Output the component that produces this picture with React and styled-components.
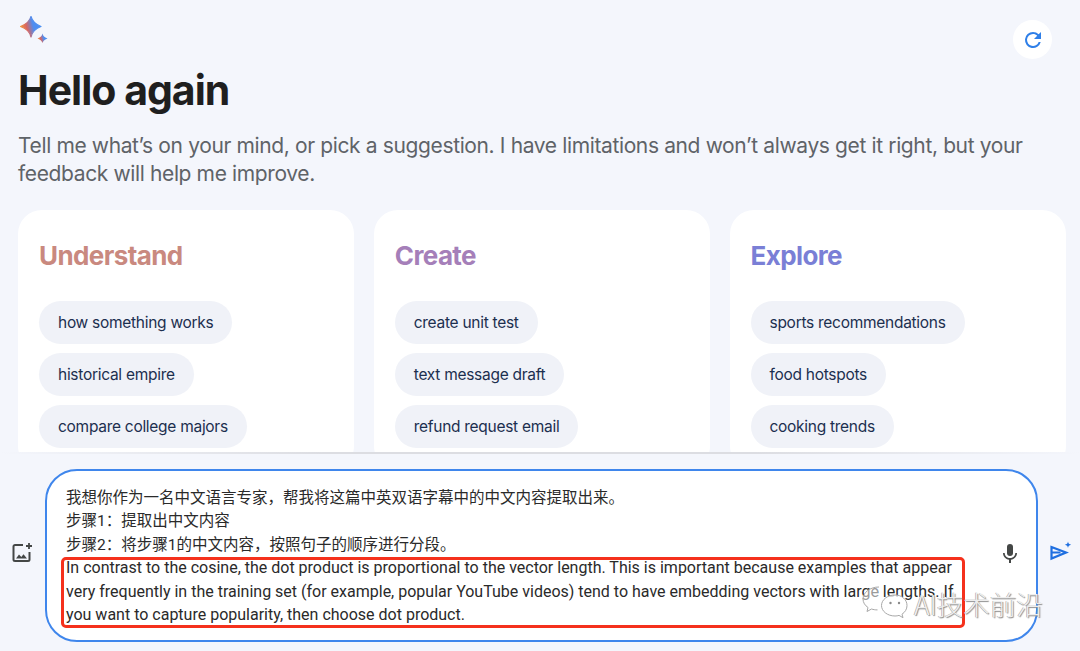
import styled, { createGlobalStyle } from 'styled-components'

const GlobalStyle = createGlobalStyle`
  html, body {
    margin: 0;
    height: 100%;
    background: #f4f6fc;
  }
  body {
    font-family: "Inter", "Noto Sans CJK SC", sans-serif;
    overflow: hidden;
  }
`

const columns = [
  { title: 'Understand', color: '#c9897f', chips: ['how something works', 'historical empire', 'compare college majors'] },
  { title: 'Create', color: '#a57fb9', chips: ['create unit test', 'text message draft', 'refund request email'] },
  { title: 'Explore', color: '#7a7fd6', chips: ['sports recommendations', 'food hotspots', 'cooking trends'] },
]

const Spark = () => (
  <svg width="30" height="30" viewBox="0 0 30 30">
    <defs>
      <linearGradient id="spark" x1="0" y1="0.6" x2="1" y2="0.35">
        <stop offset="0" stopColor="#f29a3e" />
        <stop offset="0.3" stopColor="#d9655f" />
        <stop offset="0.62" stopColor="#4f8df0" />
        <stop offset="1" stopColor="#4a90f2" />
      </linearGradient>
    </defs>
    <path d="M11 0.500C12.300 5.500 15.500 8.500 21 10.500C15.500 12.500 12.300 15.500 11 21C9.700 15.500 6.500 12.500 0.500 10.500C6.500 8.500 9.700 5.500 11 0.500Z" fill="url(#spark)" strokeLinejoin="round" stroke="url(#spark)" strokeWidth="1.200" />
    <path d="M22.500 17.500C23.100 20 24.300 21 27.500 22.500C24.300 24 23.100 25 22.500 27C21.900 25 20.700 24 17.500 22.500C20.700 21 21.900 20 22.500 17.500Z" fill="url(#spark)" />
  </svg>
)

const RefreshIcon = () => (
  <svg width="24" height="24" viewBox="0 0 24 24" fill="#2f7fe8">
    <path d="M17.650 6.350A7.950 7.950 0 0 0 12 4a8 8 0 1 0 7.730 10h-2.080A6 6 0 1 1 12 6c1.660 0 3.140.69 4.220 1.780L13 11h7V4l-2.350 2.350z" />
  </svg>
)

const AddImageIcon = () => (
  <svg width="22" height="22" viewBox="0 0 22 22">
    <path d="M12 3H4a1.500 1.500 0 0 0-1.500 1.500v13A1.500 1.500 0 0 0 4 19h13a1.500 1.500 0 0 0 1.500-1.500V10" fill="none" stroke="#444746" strokeWidth="2" />
    <path d="M5 16.500l3-4 2.300 2.500 2.200-2.800 3.500 4.300z" fill="#444746" />
    <path d="M18 1v6M15 4h6" stroke="#444746" strokeWidth="1.800" fill="none" />
  </svg>
)

const MicIcon = () => (
  <svg width="24" height="24" viewBox="0 0 24 24" fill="#444746">
    <path d="M12 14a3 3 0 0 0 3-3V5a3 3 0 0 0-6 0v6a3 3 0 0 0 3 3z" />
    <path d="M17.300 11c0 3-2.500 5.100-5.300 5.100S6.700 14 6.700 11H5c0 3.400 2.700 6.200 6 6.700V21h2v-3.300c3.300-.5 6-3.300 6-6.700h-1.700z" />
  </svg>
)

const SendIcon = () => (
  <svg width="24" height="24" viewBox="0 0 24 24">
    <path d="M2.500 7l14.500 5.500L2.500 18.500z" fill="none" stroke="#1f6fe0" strokeWidth="2.200" />
    <path d="M2.500 12.500h9" stroke="#1f6fe0" strokeWidth="2" />
    <path d="M19 1.500c.3 2 1.100 2.800 3.200 3.200-2.100.4-2.900 1.200-3.200 3.200-.3-2-1.100-2.800-3.200-3.200 2.100-.4 2.900-1.200 3.200-3.200z" fill="#1f6fe0" />
  </svg>
)

const WeChatIcon = () => (
  <svg width="46" height="36" viewBox="0 0 46 36" fill="none" stroke="#a8a8a8" strokeWidth="1">
    <path d="M17 1C8 1 1 6.500 1 13c0 3.500 2 6.500 5 8.500l-1 4 4.500-2.500c2 .6 3.500.9 6 .9" fill="#ffffff88" />
    <path d="M33 9c-7.500 0-13.500 4.700-13.500 10.500S25.500 30 33 30c1.500 0 2.800-.2 4-.6l4 2.300-1-3.500c3-2 5-5 5-8.700C45 13.700 40 9 33 9z" fill="#ffffffcc" />
    <circle cx="28.500" cy="17" r="1.200" fill="#8a8a8a" stroke="none" />
    <circle cx="37" cy="17" r="1.200" fill="#8a8a8a" stroke="none" />
  </svg>
)

const App = () => {
  return (
    <Page>
      <GlobalStyle />
      <Scroller>
        <TopBar>
          <Logo><Spark /></Logo>
          <RoundButton><RefreshIcon /></RoundButton>
        </TopBar>
        <Title>Hello again</Title>
        <Intro>
          Tell me what’s on your mind, or pick a suggestion. I have limitations and won’t always get it right, but your
          feedback will help me improve.
        </Intro>
        <Cards>
          {columns.map((col) => (
            <Card key={col.title}>
              <CardTitle $color={col.color}>{col.title}</CardTitle>
              {col.chips.map((chip) => (
                <Chip key={chip}>{chip}</Chip>
              ))}
            </Card>
          ))}
        </Cards>
      </Scroller>
      <Divider />
      <Composer>
        <SideIcon><AddImageIcon /></SideIcon>
        <InputBox>
          <Prompt>
            <div>我想你作为一名中文语言专家，帮我将这篇中英双语字幕中的中文内容提取出来。</div>
            <div>步骤1：提取出中文内容</div>
            <div>步骤2：将步骤1的中文内容，按照句子的顺序进行分段。</div>
            <Highlighted>
              In contrast to the cosine, the dot product is proportional to the vector length. This is important because
              examples that appear very frequently in the training set (for example, popular YouTube videos) tend to have
              embedding vectors with large lengths. If you want to capture popularity, then choose dot product.
            </Highlighted>
          </Prompt>
          <Mic><MicIcon /></Mic>
        </InputBox>
        <SendSlot><SendIcon /></SendSlot>
      </Composer>
      <Watermark>
        <WeChatIcon />
        <span>AI技术前沿</span>
      </Watermark>
    </Page>
  )
}

const Page = styled.main`
  position: relative;
  width: 1080px;
  height: 651px;
  overflow: hidden;
  background: #f4f6fc;
`

const Scroller = styled.div`
  height: 452px;
  overflow: hidden;
  padding: 0 15px 0 18px;
`

const TopBar = styled.div`
  display: flex;
  justify-content: space-between;
  height: 59px;
`

const Logo = styled.div`
  padding-top: 16px;
  margin-left: 2px;
`

const RoundButton = styled.div`
  width: 39px;
  height: 39px;
  margin: 20px 13px 0 0;
  border-radius: 50%;
  background: #ffffff;
  display: flex;
  align-items: center;
  justify-content: center;
`

const Title = styled.h1`
  margin: 0;
  font-size: 41px;
  line-height: 62px;
  font-weight: 700;
  letter-spacing: -1px;
  color: #1f1f1f;
`

const Intro = styled.p`
  margin: 11px 0 0;
  width: 1030px;
  font-size: 21px;
  line-height: 28px;
  letter-spacing: -0.370px;
  color: #5f6368;
`

const Cards = styled.div`
  display: grid;
  grid-template-columns: 336px 336px 336px;
  column-gap: 19.750px;
  margin-top: 22px;
`

const Card = styled.section`
  height: 260px;
  padding: 29px 21px 0;
  border-radius: 24px;
  background: #ffffff;
  box-sizing: border-box;
`

const CardTitle = styled.h2`
  margin: 0 0 28px;
  font-size: 26px;
  line-height: 34px;
  font-weight: 700;
  letter-spacing: -0.600px;
  color: ${(p) => p.$color};
`

const Chip = styled.div`
  display: flex;
  align-items: center;
  width: fit-content;
  height: 43px;
  margin-bottom: 9px;
  padding: 0 19px;
  border-radius: 22px;
  background: #f0f2f8;
  font-size: 15.500px;
  letter-spacing: -0.280px;
  color: #1c2f4f;
`

const Divider = styled.div`
  height: 2px;
  background: linear-gradient(90deg, #f4f6fc 0%, #dcdde2 30%, #dcdde2 70%, #f4f6fc 100%);
`

const Composer = styled.div`
  display: flex;
  align-items: flex-start;
  padding: 15px 0 0 11px;
`

const SideIcon = styled.div`
  width: 34px;
  margin-top: 73px;
`

const InputBox = styled.div`
  position: relative;
  width: 993px;
  height: 173px;
  box-sizing: border-box;
  padding: 16px 0 0 19px;
  border: 2px solid #3f86ec;
  border-radius: 32px;
  background: #ffffff;
`

const Prompt = styled.div`
  position: relative;
  width: 895px;
  font-family: "Roboto", "Noto Sans CJK SC", sans-serif;
  font-size: 15.500px;
  line-height: 23.400px;
  color: #2a2a2a;
`

const Highlighted = styled.div`
  position: relative;
  margin-top: -1px;
  font-size: 16px;
  &::after {
    content: '';
    position: absolute;
    left: -5px;
    right: -4px;
    top: 1px;
    bottom: -2px;
    border: 3px solid #f5311c;
    border-radius: 5px;
    box-sizing: border-box;
  }
`

const Mic = styled.div`
  position: absolute;
  top: 71px;
  right: 14px;
`

const SendSlot = styled.div`
  margin: 71px 0 0 11px;
`

const Watermark = styled.div`
  position: absolute;
  left: 862px;
  top: 584px;
  display: flex;
  align-items: center;
  gap: 6px;
  font-family: "Noto Sans CJK SC", sans-serif;
  font-size: 26.500px;
  font-weight: 300;
  color: #ffffffd9;
  text-shadow: 1px 1px 1px #8a8a8a, -0.500px -0.500px 0 #9a9a9a;
`

export default App
